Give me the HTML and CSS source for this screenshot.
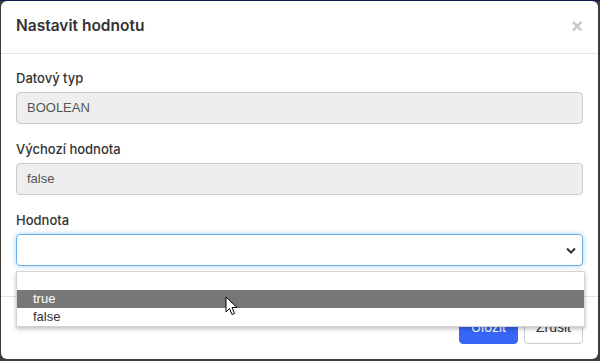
FILE: index.html
```html
<!doctype html>
<html>
  <head>
    <meta name="viewport" content="width=device-width, initial-scale=1">
    <link rel="stylesheet" href="styles.css">
    <title>Nastavit hodnotu</title>
  </head>
  <body>
    <div class="modal">
      <div class="modal-header">
        <h4 class="modal-title">Nastavit hodnotu</h4>
        <span class="close">&times;</span>
      </div>
      <div class="modal-body">
        <div class="form-group">
          <label>Datový typ</label>
          <div class="form-control readonly">BOOLEAN</div>
        </div>
        <div class="form-group">
          <label>Výchozí hodnota</label>
          <div class="form-control readonly">false</div>
        </div>
        <div class="form-group">
          <label>Hodnota</label>
          <div class="form-control select">
            <svg class="chevron" width="10" height="7" viewBox="0 0 10 7"><path d="M1 1.5 L5 5.5 L9 1.5" fill="none" stroke="#333" stroke-width="2"/></svg>
          </div>
        </div>
      </div>
      <div class="modal-footer">
        <button class="btn btn-primary">Uložit</button>
        <button class="btn btn-default">Zrušit</button>
      </div>
      <ul class="options">
        <li>&nbsp;</li>
        <li class="hover">true</li>
        <li>false</li>
      </ul>
      <svg class="cursor" width="14" height="20" viewBox="0 0 14 20"><path d="M1 1 L1 16 L4.5 12.5 L7 18.5 L9.5 17.5 L7 11.5 L12 11.5 Z" fill="#fff" stroke="#000" stroke-width="1" stroke-linejoin="round"/></svg>
    </div>
  </body>
</html>
```

FILE: styles.css
```css
html, body {
  height: 100%;
}
body {
  margin: 0;
  background: #3c3c3c;
  border-top: 1px solid #0d1a4a;
  box-sizing: border-box;
  overflow: hidden;
  font-family: "Liberation Sans", Arial, sans-serif;
  color: #333;
}
.modal {
  position: relative;
  width: 597px;
  height: 358px;
  margin-left: 1px;
  background: #fff;
  border-radius: 6px;
}
.modal-header {
  display: flex;
  justify-content: space-between;
  align-items: center;
  padding: 14px 15px 16px;
  border-bottom: 1px solid #e5e5e5;
}
.modal-title {
  margin: 0;
  font-family: Inter, sans-serif;
  font-size: 15.5px;
  font-weight: 600;
  line-height: 22px;
  color: #333;
}
.close {
  font-family: "Liberation Sans", Arial, sans-serif;
  font-size: 20px;
  font-weight: bold;
  line-height: 20px;
  color: #c6c6c6;
  margin-right: 0;
}
.modal-body {
  padding: 15px 15px;
}
.form-group {
  margin-bottom: 16px;
}
.form-group:last-child {
  margin-bottom: 0;
}
label {
  display: block;
  font-family: Inter, sans-serif;
  font-size: 13px;
  font-weight: 500;
  line-height: 19px;
  margin-bottom: 4px;
  color: #333;
}
.form-control {
  box-sizing: border-box;
  height: 32px;
  padding: 0 10px;
  border: 1px solid #ccc;
  border-radius: 4px;
  font-size: 13px;
  line-height: 30px;
  color: #555;
}
.readonly {
  background: #eee;
}
.select {
  position: relative;
  border-color: #66afe9;
  box-shadow: 0 0 5px rgba(102, 175, 233, 0.6);
}
.chevron {
  position: absolute;
  right: 6px;
  top: 12px;
}
.modal-footer {
  display: flex;
  justify-content: flex-end;
  gap: 6px;
  margin-top: 15px;
  padding: 13px 15px;
  border-top: 1px solid #e5e5e5;
}
.btn {
  height: 34px;
  padding: 0 11px;
  border-radius: 4px;
  font-family: "Liberation Sans", Arial, sans-serif;
  font-size: 14px;
}
.btn-primary {
  background: #3765f6;
  border: 1px solid #3765f6;
  color: #fff;
}
.btn-default {
  background: #fff;
  border: 1px solid #ccc;
  color: #333;
}
.options {
  position: absolute;
  left: 15px;
  top: 270px;
  width: 567px;
  margin: 0;
  padding: 0;
  list-style: none;
  background: #fff;
  border: 1px solid #d4d4d4;
  box-shadow: 0 2px 4px rgba(0, 0, 0, 0.25);
  font-size: 13px;
  line-height: 18px;
  color: #333;
}
.options li {
  padding-left: 16px;
  height: 18px;
}
.options .hover {
  background: #777;
  color: #fff;
}
.cursor {
  position: absolute;
  left: 224px;
  top: 295px;
}
```
